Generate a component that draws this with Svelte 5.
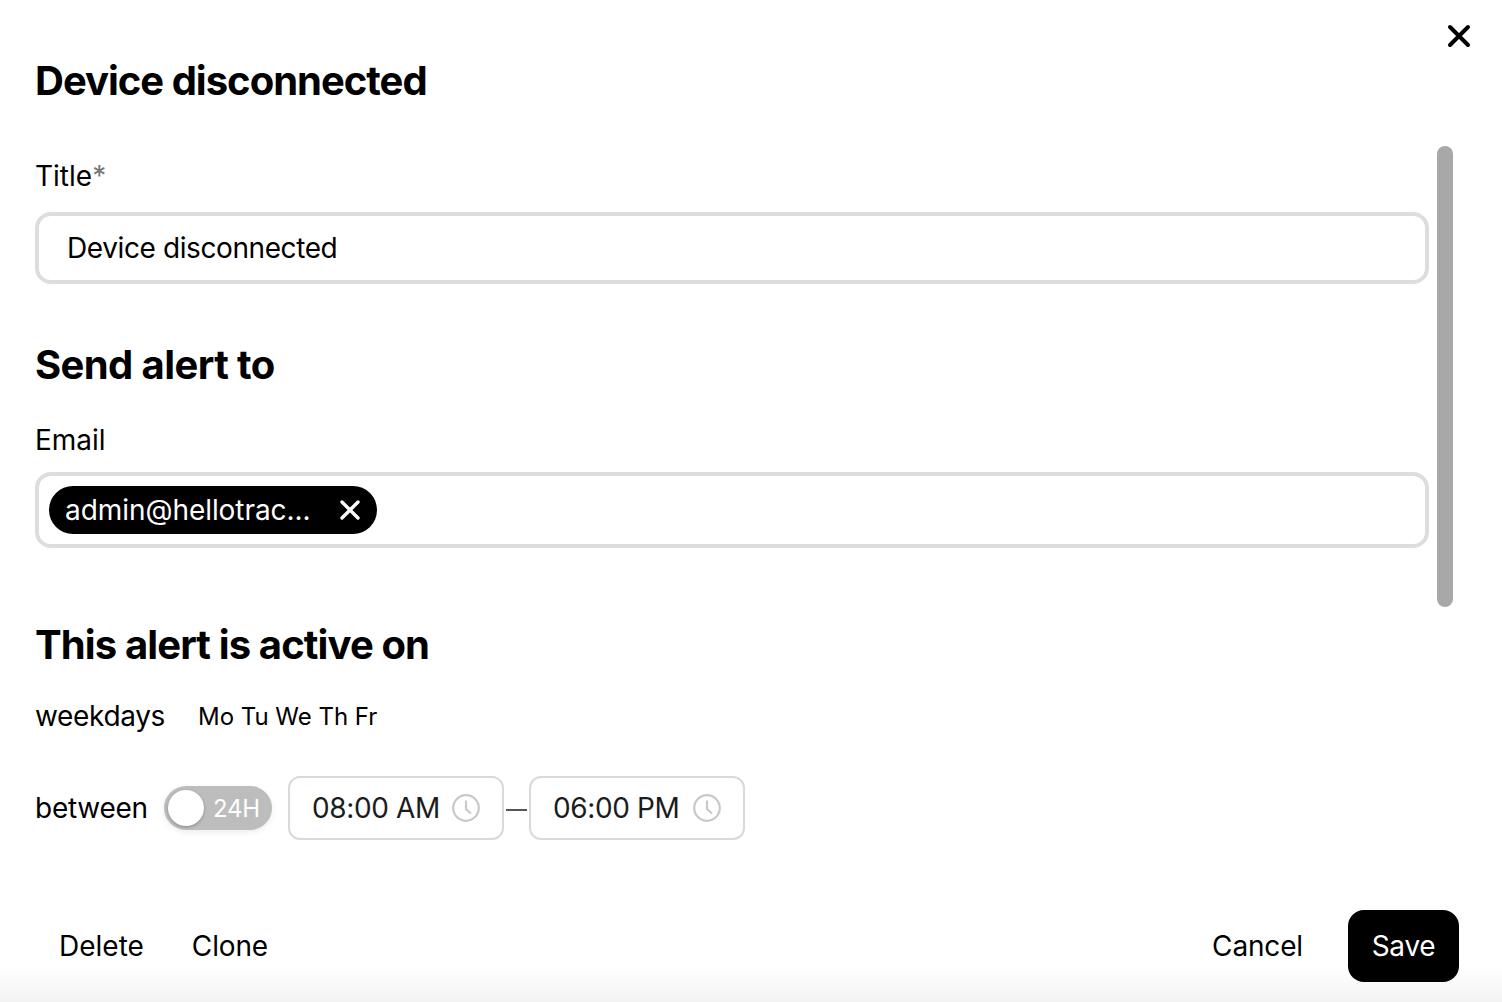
<script lang="ts">
  const days = ['Mo', 'Tu', 'We', 'Th', 'Fr'];
  const times = ['08:00 AM', '06:00 PM'];
</script>

<div class="dialog">
  <button class="close" aria-label="Close">
    <svg width="24" height="24" viewBox="0 0 24 24"><path d="M3 3 L21 21 M21 3 L3 21" /></svg>
  </button>

  <div class="scrollbar"></div>

  <h1>Device disconnected</h1>

  <div class="form">
    <label class="label" for="title">Title<span class="req">*</span></label>
    <div class="field title-field" id="title">Device disconnected</div>

    <h2 class="send">Send alert to</h2>

    <div class="label email-label">Email</div>
    <div class="field email-field">
      <span class="chip">
        <span class="chip-text">admin@hellotrac...</span>
        <svg width="20" height="20" viewBox="0 0 20 20"><path d="M2 2 L18 18 M18 2 L2 18" /></svg>
      </span>
    </div>

    <h2 class="active">This alert is active on</h2>

    <div class="row weekdays">
      <span class="row-label">weekdays</span>
      <span class="days">
        {#each days as d}<span>{d}</span>{/each}
      </span>
    </div>

    <div class="row between">
      <span class="row-label">between</span>
      <span class="toggle">
        <span class="knob"></span>
        <span class="toggle-text">24H</span>
      </span>
      {#each times as t, i}
        {#if i > 0}<span class="dash"></span>{/if}
        <span class="time">
          <span>{t}</span>
          <svg width="28" height="28" viewBox="0 0 28 28">
            <circle cx="14" cy="14" r="12.8" />
            <path d="M14 6.5 V15 L19 19.5" />
          </svg>
        </span>
      {/each}
    </div>
  </div>

  <footer>
    <button class="link">Delete</button>
    <button class="link clone">Clone</button>
    <span class="spacer"></span>
    <button class="link cancel">Cancel</button>
    <button class="save">Save</button>
  </footer>
</div>

<style>
  :global(body) {
    margin: 0;
    background: #fff;
  }
  .dialog {
    position: relative;
    width: 1502px;
    height: 1002px;
    overflow: hidden;
    box-sizing: border-box;
    padding: 0 0 0 35px;
    font-family: Inter, "Liberation Sans", sans-serif;
    color: #000;
    display: flex;
    flex-direction: column;
  }
  .close {
    position: absolute;
    top: 24px;
    left: 1447px;
    width: 24px;
    height: 24px;
    padding: 0;
    border: 0;
    background: none;
  }
  .close svg {
    display: block;
  }
  .close path {
    stroke: #000;
    stroke-width: 4;
    stroke-linecap: round;
    fill: none;
  }
  .scrollbar {
    position: absolute;
    left: 1437px;
    top: 146px;
    width: 16px;
    height: 461px;
    border-radius: 8px;
    background: #a8a8a8;
  }
  h1 {
    margin: 57px 0 0;
    font-size: 40px;
    line-height: 48px;
    font-weight: 700;
    letter-spacing: -1px;
  }
  h2 {
    margin: 0;
    font-size: 40px;
    line-height: 48px;
    font-weight: 700;
    letter-spacing: -0.6px;
  }
  .form {
    width: 1394px;
    display: flex;
    flex-direction: column;
  }
  .label {
    font-size: 28px;
    line-height: 36px;
    margin-top: 53px;
  }
  .req {
    color: #777;
  }
  .field {
    box-sizing: border-box;
    border: 4px solid #ddd;
    border-radius: 16px;
    background: #fff;
  }
  .title-field {
    height: 72px;
    margin-top: 18px;
    padding: 0 0 0 28px;
    display: flex;
    align-items: center;
    font-size: 28px;
    letter-spacing: -0.4px;
  }
  .send {
    margin-top: 57px;
  }
  .email-label {
    margin-top: 33px;
  }
  .email-field {
    height: 76px;
    margin-top: 14px;
    padding: 10px;
  }
  .chip {
    width: 328px;
    height: 48px;
    box-sizing: border-box;
    padding: 0 17px 0 16px;
    border-radius: 24px;
    background: #000;
    color: #fff;
    font-size: 28px;
    letter-spacing: -0.06px;
    display: flex;
    align-items: center;
    justify-content: space-between;
  }
  .chip path {
    stroke: #fff;
    stroke-width: 3.4;
    stroke-linecap: round;
    fill: none;
  }
  .active {
    margin-top: 73px;
    letter-spacing: -0.88px;
  }
  .row {
    display: flex;
    align-items: center;
  }
  .row-label {
    font-size: 28px;
    letter-spacing: -0.25px;
  }
  .weekdays {
    margin-top: 27px;
    height: 40px;
  }
  .weekdays .row-label {
    letter-spacing: -0.35px;
  }
  .days {
    margin-left: 33px;
    display: flex;
    gap: 6.7px;
    font-size: 24px;
  }
  .between {
    margin-top: 40px;
    height: 64px;
  }
  .toggle {
    margin-left: 16px;
    margin-right: 16px;
    width: 108px;
    height: 44px;
    box-sizing: border-box;
    padding: 4px;
    border-radius: 22px;
    background: #bdbdbd;
    display: flex;
    align-items: center;
    box-shadow: 0 2px 6px rgba(0, 0, 0, 0.08);
  }
  .knob {
    width: 36px;
    height: 36px;
    border-radius: 50%;
    background: #fff;
    box-shadow: 0 1px 3px rgba(0, 0, 0, 0.3);
  }
  .toggle-text {
    margin-left: 9px;
    color: #fff;
    font-size: 24px;
    letter-spacing: -0.2px;
  }
  .time {
    width: 216px;
    height: 64px;
    box-sizing: border-box;
    border: 2px solid #d9d9d9;
    border-radius: 12px;
    padding: 0 22px 0 22px;
    display: flex;
    align-items: center;
    justify-content: space-between;
    font-size: 28px;
    letter-spacing: -0.35px;
    color: #1c1c1c;
  }
  .time circle,
  .time path {
    fill: none;
    stroke: #c8c8c8;
    stroke-width: 2.2;
  }
  .dash {
    width: 21px;
    height: 2px;
    margin: 3px 2px 0;
    background: #555;
  }
  footer {
    position: absolute;
    left: 0;
    right: 0;
    bottom: 0;
    height: 112px;
    box-sizing: border-box;
    padding: 0 43px 0 35px;
    display: flex;
    align-items: center;
    background: linear-gradient(to bottom, #fff 0, #fff 68%, #f3f3f3 100%);
  }
  .spacer {
    flex: 1;
  }
  button {
    font-family: inherit;
    color: inherit;
    cursor: pointer;
  }
  .link {
    border: 0;
    background: none;
    padding: 0 24px;
    font-size: 28px;
    line-height: 36px;
  }
  .clone {
    margin-left: 0;
    letter-spacing: -0.15px;
  }
  .cancel {
    margin-right: 21px;
    letter-spacing: -0.15px;
  }
  .save {
    width: 111px;
    height: 72px;
    border: 0;
    border-radius: 16px;
    background: #000;
    color: #fff;
    font-size: 28px;
    letter-spacing: -0.3px;
  }
</style>
